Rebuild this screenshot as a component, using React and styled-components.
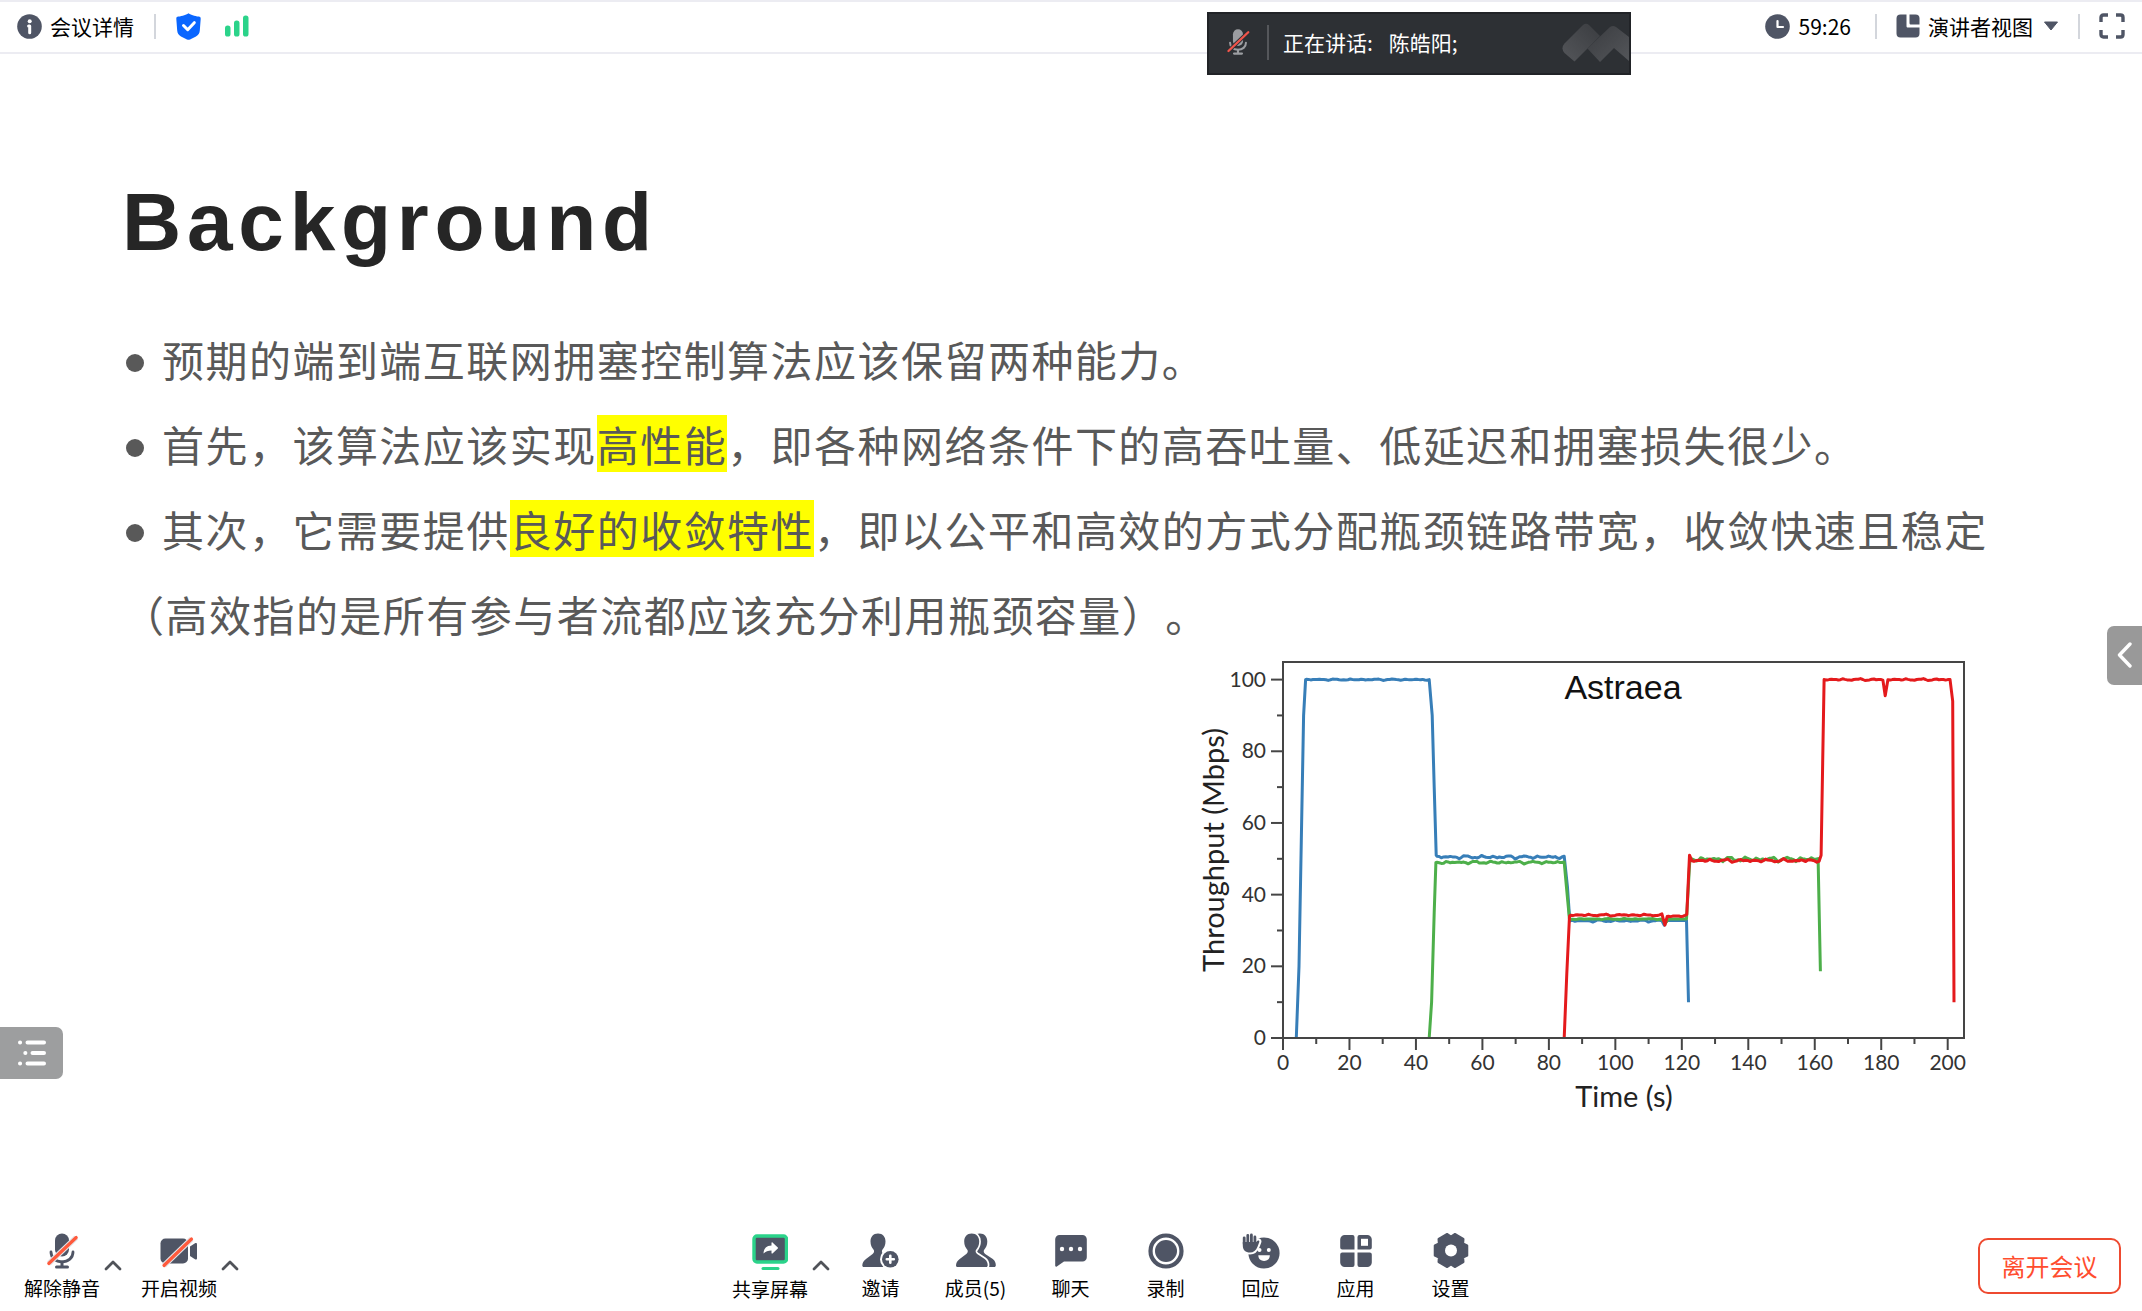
import React from "react";
import styled, { createGlobalStyle } from "styled-components";

const ink = "#4f5565";
const red = "#ff5a3c";
const green = "#2bd38a";
const uiFont = '"Noto Sans CJK SC", "Noto Sans", sans-serif';

const GlobalStyle = createGlobalStyle`
  *, *::before, *::after { box-sizing: border-box; }
  body { margin: 0; background: #fff; font-family: ${uiFont}; color: #000; text-spacing-trim: space-all; }
  button, select { font: inherit; color: inherit; background: none; border: 0; padding: 0; margin: 0; cursor: pointer; }
  h1, p, ul, figure { margin: 0; padding: 0; }
  svg { display: block; flex: none; }
`;

/* ---------- layout ---------- */

const Page = styled.div`
  position: relative;
  display: flex;
  flex-direction: column;
  min-height: 100vh;
  overflow: hidden;
`;

const TopBar = styled.header`
  display: flex;
  align-items: center;
  justify-content: space-between;
  height: 54px;
  padding: 0 17px 2px;
  border-top: 2px solid #ececf2;
  border-bottom: 2px solid #ececf2;
`;

const BarGroup = styled.div`
  display: flex;
  align-items: center;
  gap: ${(p) => p.$gap}px;
`;

const BarButton = styled.button`
  display: flex;
  align-items: center;
  gap: 8px;
  font-size: 21px;
  line-height: 30px;
`;

const Timer = styled.div`
  display: flex;
  align-items: center;
  gap: 9px;
  padding-right: 5px;
  font-size: 21px;
  line-height: 30px;
`;

const ViewPicker = styled.label`
  display: grid;
  grid-template-columns: 24px auto 18px;
  align-items: center;
  column-gap: 8px;

  svg:last-child {
    justify-self: end;
  }
`;

const ViewSelect = styled.select`
  appearance: none;
  font-size: 21px;
  line-height: 30px;
`;

const Divider = styled.span`
  width: 2px;
  height: ${(p) => p.$height || 25}px;
  background: ${(p) => p.$color || "#d3d6dc"};
`;

const SpeakerPanel = styled.aside`
  position: absolute;
  top: 12px;
  right: 511px;
  display: flex;
  align-items: center;
  width: 424px;
  height: 63px;
  padding: 0 0 3px 14px;
  gap: 14px;
  border: 2px solid #212327;
  background: #2d3034;
  color: #fff;
  font-size: 21px;
  line-height: 30px;
`;

const SpeakerText = styled.p`
  display: flex;
  flex: 1;
  gap: 16px;
`;

const Slide = styled.main`
  flex: 1;
  display: flex;
  flex-direction: column;
  padding: 120px 140px 0 122px;
`;

const Title = styled.h1`
  font: bold 82px/96px "Liberation Sans", Arial, sans-serif;
  letter-spacing: 0.07em;
  color: #262626;
`;

const slideText = `
  font-size: 42px;
  line-height: 85px;
  letter-spacing: 0.035em;
  color: #595959;
`;

const Points = styled.ul`
  ${slideText}
  margin-top: 46px;
  padding-left: 4px;
  list-style: none;
`;

const Point = styled.li`
  display: flex;
  align-items: center;
  gap: 18px;

  &::before {
    content: "";
    flex: none;
    width: 18px;
    height: 18px;
    margin-top: 8px;
    border-radius: 50%;
    background: #595959;
  }
`;

const Continuation = styled.p`
  ${slideText}
`;

const Highlight = styled.mark`
  display: inline-block;
  line-height: 57px;
  background: #ff0;
  color: inherit;
`;

const Figure = styled.figure`
  align-self: flex-end;
  margin-top: 2px;
`;

const ToolBar = styled.footer`
  display: flex;
  align-items: center;
  justify-content: space-between;
  height: 95px;
  padding: 8px 21px 0 23px;
`;

const ToolGroup = styled.div`
  display: flex;
  align-items: center;
`;

const SplitTool = styled.div`
  display: flex;
  align-items: center;
  margin-right: ${(p) => p.$after || 0}px;
`;

const ToolButton = styled.button`
  display: flex;
  flex-direction: column;
  align-items: center;
  gap: 5px;
  width: ${(p) => p.$width || 95}px;
  font-size: 19px;
  line-height: 28px;
  white-space: nowrap;
`;

const MoreButton = styled.button`
  display: grid;
  place-items: center;
  width: 24px;
  height: 24px;
  margin-bottom: 6px;
`;

const LeaveButton = styled.button`
  width: 143px;
  height: 56px;
  margin-bottom: 4px;
  border: 2px solid #ee4a30;
  border-radius: 10px;
  color: #ff4d2e;
  font-size: 24px;
  line-height: 36px;
`;

const OutlineTab = styled.button`
  position: absolute;
  left: 0;
  bottom: 232px;
  display: grid;
  place-items: center;
  width: 63px;
  height: 52px;
  border-radius: 0 7px 7px 0;
  background: #9d9e9f;
`;

const SideTab = styled.button`
  position: absolute;
  right: 0;
  top: calc(50% - 30px);
  display: grid;
  place-items: center;
  width: 35px;
  height: 59px;
  border-radius: 7px 0 0 7px;
  background: #999;
`;

/* ---------- icons ---------- */

const Icon = ({ w = 36, h = 36, vb, children }) => (
  <svg width={w} height={h} viewBox={vb || `0 0 ${w} ${h}`} fill="none" aria-hidden="true">
    {children}
  </svg>
);

const InfoIcon = () => (
  <Icon w={25} h={25}>
    <circle cx="12.5" cy="12.5" r="12.3" fill={ink} />
    <circle cx="12.7" cy="7.2" r="2" fill="#fff" />
    <path d="M11.6 12h1.1v6.800" stroke="#fff" strokeWidth="3" strokeLinecap="round" strokeLinejoin="round" />
  </Icon>
);

const ShieldIcon = () => (
  <Icon w={25} h={27}>
    <path d="M12.5.3C14 1.6 19 3.300 22.600 3.600 24 3.700 24.700 4.400 24.700 5.800L23.800 17.500C23.500 20.500 22.500 22 20 23.500L14 26.500Q12.500 27.200 11 26.500L5 23.500C2.500 22 1.500 20.500 1.200 17.500L.3 5.800C.3 4.400 1 3.700 2.400 3.600 6 3.300 11 1.600 12.500.3Z" fill="#0a66ff" />
    <path d="M7.500 12.500l4.200 4.200 6.600-7" stroke="#fff" strokeWidth="3" strokeLinecap="round" strokeLinejoin="round" />
  </Icon>
);

const SignalIcon = () => (
  <Icon w={24} h={22}>
    <g fill={green}>
      <rect x="0" y="10.500" width="5.500" height="11" rx="2.600" />
      <rect x="9" y="5.500" width="5.500" height="16" rx="2.600" />
      <rect x="18" y=".5" width="5.500" height="21" rx="2.600" />
    </g>
  </Icon>
);

const ClockIcon = () => (
  <Icon w={25} h={25}>
    <circle cx="12.500" cy="12.500" r="12.300" fill={ink} />
    <path d="M12.500 7v6h5.500" stroke="#fff" strokeWidth="2.200" strokeLinecap="round" strokeLinejoin="round" />
  </Icon>
);

const LayoutIcon = () => (
  <Icon w={24} h={24}>
    <g fill={ink}>
      <path d="M4 .5h6.500v11.500c0 1 .5 1.500 1.500 1.500h11.500V19.500a4 4 0 0 1-4 4H4.500a4 4 0 0 1-4-4V4.500a4 4 0 0 1 4-4z" />
      <path d="M13.500.5h6a4 4 0 0 1 4 4v6h-8.500c-1 0-1.500-.5-1.500-1.500z" />
    </g>
  </Icon>
);

const CaretIcon = () => (
  <Icon w={16} h={10}>
    <path d="M1.500 1h13L8 9z" fill={ink} stroke={ink} strokeLinejoin="round" />
  </Icon>
);

const FullscreenIcon = () => (
  <Icon w={26} h={26}>
    <path d="M2 9V4.500Q2 2 4.500 2H9M17 2h4.500Q24 2 24 4.500V9M24 17v4.500Q24 24 21.500 24H17M9 24H4.500Q2 24 2 21.500V17" stroke={ink} strokeWidth="3.400" />
  </Icon>
);

const MicShape = ({ color, slash, back }) => (
  <>
    <rect x="11" y=".5" width="14" height="23" rx="7" fill={color} />
    <path d="M7 19c0 6 4.800 9.800 11 9.800S29 25 29 19" stroke={color} strokeWidth="2.800" strokeLinecap="round" />
    <path d="M18 29v5M12.500 34h11" stroke={color} strokeWidth="3" strokeLinecap="round" />
    <path d="M4.800 30.500L32.200 4.500" stroke={back} strokeWidth="5.500" />
    <path d="M4.800 30.500L32.200 4.500" stroke={slash} strokeWidth="3.200" strokeLinecap="round" />
  </>
);

const MicOffIcon = () => (
  <Icon>
    <MicShape color={ink} slash={red} back="#e4e5e9" />
  </Icon>
);

const PanelMicIcon = () => (
  <Icon w={30} h={26} vb="-2 0 40 36">
    <MicShape color="#9b9da1" slash="#f0544a" back="#2d3034" />
  </Icon>
);

const VideoOffIcon = () => (
  <Icon w={38} h={36}>
    <rect x=".5" y="5.500" width="27.500" height="25" rx="5" fill={ink} />
    <path d="M30 13.500l5-3.300c1-.6 2-.2 2 1v14c0 1.200-1 1.600-2 1l-5-3.300z" fill={ink} />
    <path d="M4 32.500L31.500 6" stroke="#e4e5e9" strokeWidth="5.500" />
    <path d="M4 32.500L31.500 6" stroke={red} strokeWidth="3.200" strokeLinecap="round" />
  </Icon>
);

const ShareIcon = () => (
  <Icon w={36} h={37}>
    <rect x="2" y="3" width="32.500" height="26" rx="3" fill={ink} stroke={green} strokeWidth="3.400" />
    <path d="M11.500 20.500c.3-5.200 3.200-8 8-8V9.800c0-.6.600-.8 1-.4l5.300 5c.4.400.4.800 0 1.200l-5.300 4.800c-.4.400-1 .2-1-.4v-2.600c-3.400 0-6 1-8 3.100z" fill="#fff" />
    <rect x="9.500" y="34" width="18" height="3" rx="1.500" fill={green} />
  </Icon>
);

const personPath =
  "M16 .5C20.800.5 23.500 4 23.500 8.500 23.500 12 22.200 14.600 20.400 16.800 19.400 18.200 20 20 21.400 21L29 26C31.500 27.800 32 30.500 32 32.200 32 33.400 31.500 34 30.200 34H1.800C.8 34 .3 33.400.3 32.500.3 30 1.500 27.800 4 26L10.600 21C12 20 12.600 18.200 11.600 16.800 9.800 14.600 8.500 12 8.500 8.500 8.500 4 11.200.5 16 .5Z";

const InviteIcon = () => (
  <Icon w={37} h={36}>
    <path d={personPath} fill={ink} />
    <circle cx="28.300" cy="26.300" r="10.300" fill="#fff" />
    <circle cx="28.300" cy="26.300" r="8.300" fill={ink} />
    <path d="M28.300 22.800v7M24.800 26.300h7" stroke="#fff" strokeWidth="2.600" strokeLinecap="round" />
  </Icon>
);

const MembersIcon = () => (
  <Icon w={40} h={36}>
    <path d={personPath} fill={ink} transform="translate(7.800 0)" />
    <path d={personPath} fill={ink} stroke="#fff" strokeWidth="3.400" paintOrder="stroke" transform="translate(-.3 0)" />
  </Icon>
);

const ChatIcon = () => (
  <Icon w={32} h={36}>
    <path d="M4.500 2h23a4.300 4.300 0 0 1 4.300 4.300v18a4.300 4.300 0 0 1-4.300 4.300H9L1.800 33.500C.8 34 .2 33.500.2 32.500V6.300A4.300 4.300 0 0 1 4.500 2z" fill={ink} />
    <g fill="#fff">
      <circle cx="7" cy="16" r="2.200" />
      <circle cx="16" cy="16" r="2.200" />
      <circle cx="25" cy="16" r="2.200" />
    </g>
  </Icon>
);

const RecordIcon = () => (
  <Icon>
    <circle cx="18" cy="18" r="15.500" stroke={ink} strokeWidth="4.200" />
    <circle cx="18" cy="18" r="11" fill={ink} />
  </Icon>
);

const palmPath = "M.8 9H14.200L15.500 7.800C16.300 7 17.800 7.600 17.300 9L15.600 13.500C14 17.500 11.500 19.500 8 19.500 3.500 19.500.8 17 .8 12.500Z";

const ReactIcon = () => (
  <Icon w={38} h={36}>
    <circle cx="22" cy="20" r="15.600" fill={ink} />
    <path d={palmPath} fill="#fff" stroke="#fff" strokeWidth="4" strokeLinejoin="round" />
    <path d={palmPath} fill={ink} />
    <path d="M2.200 4.800V11M5.800 2.300V11M9.400 1.900V11M12.900 3.900V11" stroke={ink} strokeWidth="2.800" strokeLinecap="round" />
    <circle cx="17.500" cy="17" r="2" fill="#fff" />
    <circle cx="26.800" cy="17" r="2" fill="#fff" />
    <path d="M16.300 22.300h11.500c0 3.600-2.400 5.700-5.700 5.700s-5.800-2.100-5.800-5.700z" fill="#fff" />
  </Icon>
);

const AppsIcon = () => (
  <Icon w={32} h={36}>
    <g fill={ink}>
      <path d="M5 2h7.500a2 2 0 0 1 2 2v12.500H2.200a2 2 0 0 1-2-2V6.500A4.500 4.500 0 0 1 5 2z" />
      <path d="M19.500 2H27a4.500 4.500 0 0 1 4.800 4.500v8a2 2 0 0 1-2 2H17.500V4a2 2 0 0 1 2-2z" />
      <path d="M2.200 19.500h12.300V32a2 2 0 0 1-2 2H5A4.500 4.500 0 0 1 .2 29.500v-8a2 2 0 0 1 2-2z" />
      <path d="M17.500 19.500h12.300a2 2 0 0 1 2 2v8A4.500 4.500 0 0 1 27 34h-7.500a2 2 0 0 1-2-2z" />
    </g>
    <rect x="21" y="5.800" width="7" height="7" fill="#fff" />
  </Icon>
);

const gearPoints = Array.from({ length: 6 }, (_, k) =>
  [[-17, 16.800], [17, 16.800], [30, 13.800]].map(([offset, r]) => {
    const a = ((k * 60 + offset) * Math.PI) / 180;
    return `${(18 + r * Math.cos(a)).toFixed(2)},${(17.500 + r * Math.sin(a)).toFixed(2)}`;
  }).join(" ")
).join(" ");

const GearIcon = () => (
  <Icon>
    <polygon points={gearPoints} fill={ink} stroke={ink} strokeWidth="2.400" strokeLinejoin="round" />
    <circle cx="18" cy="17.500" r="6" fill="#fff" />
  </Icon>
);

const ChevronUpIcon = () => (
  <Icon w={18} h={12}>
    <path d="M2 10l7-7 7 7" stroke="#505359" strokeWidth="2.800" strokeLinecap="round" strokeLinejoin="round" />
  </Icon>
);

const ChevronLeftIcon = () => (
  <Icon w={16} h={26}>
    <path d="M13 2L2.500 13 13 24" stroke="#fff" strokeWidth="3.400" strokeLinecap="round" strokeLinejoin="round" />
  </Icon>
);

const OutlineIcon = () => (
  <Icon w={30} h={26}>
    <g stroke="#fff" strokeWidth="4" strokeLinecap="round">
      <path d="M3 2.500h.1M10.500 2.500H27M8.300 13h.1M15.500 13H27M3 23.500h.1M10.500 23.500H27" />
    </g>
  </Icon>
);

const BrandMark = () => (
  <Icon w={68} h={41}>
    <defs>
      <linearGradient id="fold" x1="0" y1="0" x2="1" y2="1">
        <stop offset="0" stopColor="#3a3c40" />
        <stop offset="1" stopColor="#54565a" />
      </linearGradient>
      <linearGradient id="wing" x1="0" y1="1" x2="1" y2="0">
        <stop offset="0" stopColor="#54565a" />
        <stop offset="1" stopColor="#3a3c40" />
      </linearGradient>
    </defs>
    <path d="M3.500 21.500L22 3Q25 .5 28 3L39 14 26.500 26.500 13.500 39.500 3.500 31Q-.5 26 3.500 21.500Z" fill="url(#wing)" />
    <path d="M26.500 26.500L49 5Q52 3 55 5L68 15V39L53 26 39 40Z" fill="url(#fold)" />
  </Icon>
);

/* ---------- chart ---------- */

const chart = { width: 807, height: 460, left: 88, top: 4, right: 769, bottom: 380 };
const px = (t) => chart.left + t * 3.3235;
const py = (v) => chart.bottom - v * 3.584;

const wobble = (i, seed) =>
  Math.sin(i * 1.900 + seed) * 0.4 * Math.sin(i * 0.37 + seed) + Math.sin(i * 5.300 + seed * 2) * 0.35 + Math.sin(i * 0.700 + seed * 5) * 0.25;

/* A segment written as [t0, t1, value, noise] is a noisy plateau; [t, value] is a plain vertex. */
const trace = (parts, seed) =>
  parts
    .flatMap((s) => {
      if (s.length === 2) return [s];
      const [t0, t1, value, noise] = s;
      const n = Math.round((t1 - t0) * 1.5);
      return Array.from({ length: n + 1 }, (_, i) => [t0 + ((t1 - t0) * i) / n, value + noise * wobble(i, seed)]);
    })
    .map(([t, v]) => `${px(t).toFixed(1)},${py(v).toFixed(1)}`)
    .join(" ");

const series = [
  {
    color: "#377eb8",
    points: trace([[4, 0], [4.800, 20], [5.500, 55], [6.200, 90], [6.800, 100], [7, 44, 100, 0.25], [44.900, 90], [45.500, 70], [46.100, 51], [46.300, 84.600, 50.500, 0.6], [85.600, 42], [86.300, 32.600], [86.500, 114, 32.700, 0.4], [114.700, 31.500], [115.500, 32.800], [121.400, 32.800], [122, 10]], 1),
  },
  {
    color: "#4daf4a",
    points: trace([[44, 0], [44.700, 10], [45.500, 35], [46, 49], [46.300, 84.600, 49, 0.5], [85.300, 42], [86.200, 33], [86.500, 114, 33.200, 0.2], [115, 32], [116, 33.200], [121.400, 33.200], [122.400, 49.500], [123, 161, 49.900, 0.9], [161.700, 18.600]], 3),
  },
  {
    color: "#e41a1c",
    points: trace([[84.600, 0], [85.400, 18], [86.200, 34], [86.500, 114, 34.300, 0.35], [114.900, 31.500], [115.600, 33.900], [116, 121, 34, 0.35], [121.500, 34.500], [122.300, 51], [123, 161.300, 49.500, 0.6], [161.900, 51], [162.800, 100], [163, 180.500, 100, 0.35], [181.200, 95.500], [182, 200.700, 100, 0.35], [201.500, 94], [201.900, 10]], 2),
  },
];

const AxisLine = styled.path`
  fill: none;
  stroke: #454545;
  stroke-width: 2px;
`;

const TickLabel = styled.text`
  font: 21px Lato, sans-serif;
  fill: #333;
  text-anchor: ${(p) => p.$anchor};
`;

const AxisTitle = styled.text`
  font: 29px Lato, sans-serif;
  fill: #222;
  text-anchor: middle;
`;

const ChartTitle = styled.text`
  font: 34px "Liberation Sans", Arial, sans-serif;
  fill: #111;
  text-anchor: middle;
`;

const range = (end, step) => Array.from({ length: Math.floor(end / step) + 1 }, (_, i) => i * step);

const ThroughputChart = () => (
  <svg width={chart.width} height={chart.height} role="img" aria-label="Astraea throughput over time">
    {series.map((s) => (
      <polyline key={s.color} points={s.points} fill="none" stroke={s.color} strokeWidth="3" strokeLinejoin="round" />
    ))}
    <AxisLine d={`M${chart.left} ${chart.top}H${chart.right}V${chart.bottom}H${chart.left}Z`} />
    {range(200, 10).map((t) => (
      <AxisLine key={t} d={`M${px(t)} ${chart.bottom}v${t % 20 ? 6 : 12}`} />
    ))}
    {range(100, 10).map((v) => (
      <AxisLine key={v} d={`M${chart.left} ${py(v)}h${v % 20 ? -6 : -12}`} />
    ))}
    {range(200, 20).map((t) => (
      <TickLabel key={t} $anchor="middle" x={px(t)} y={chart.bottom + 32}>{t}</TickLabel>
    ))}
    {range(100, 20).map((v) => (
      <TickLabel key={v} $anchor="end" x={chart.left - 17} y={py(v) + 7}>{v}</TickLabel>
    ))}
    <AxisTitle x="429" y="449">Time (s)</AxisTitle>
    <AxisTitle transform="translate(29 192) rotate(-90)">Throughput (Mbps)</AxisTitle>
    <ChartTitle x="428" y="41">Astraea</ChartTitle>
  </svg>
);

/* ---------- page ---------- */

const tools = [
  ["邀请", InviteIcon],
  ["成员(5)", MembersIcon],
  ["聊天", ChatIcon],
  ["录制", RecordIcon],
  ["回应", ReactIcon],
  ["应用", AppsIcon],
  ["设置", GearIcon],
];

const Tool = ({ label, icon: Glyph, width }) => (
  <ToolButton type="button" $width={width}>
    <Glyph />
    {label}
  </ToolButton>
);

const ToolWithMenu = ({ label, icon, menuLabel, after }) => (
  <SplitTool $after={after}>
    <Tool label={label} icon={icon} width={78} />
    <MoreButton type="button" aria-label={menuLabel}>
      <ChevronUpIcon />
    </MoreButton>
  </SplitTool>
);

export default function App() {
  return (
    <Page lang="zh-CN">
      <GlobalStyle />
      <TopBar>
        <BarGroup $gap={20}>
          <BarButton type="button">
            <InfoIcon />
            会议详情
          </BarButton>
          <Divider />
          <BarGroup $gap={24}>
            <BarButton type="button" aria-label="会议安全">
              <ShieldIcon />
            </BarButton>
            <BarButton type="button" aria-label="网络状态">
              <SignalIcon />
            </BarButton>
          </BarGroup>
        </BarGroup>
        <BarGroup $gap={19}>
          <Timer>
            <ClockIcon />
            59:26
          </Timer>
          <Divider />
          <ViewPicker>
            <LayoutIcon />
            <ViewSelect aria-label="视图" defaultValue="speaker">
              <option value="speaker">演讲者视图</option>
            </ViewSelect>
            <CaretIcon />
          </ViewPicker>
          <Divider />
          <BarButton type="button" aria-label="全屏">
            <FullscreenIcon />
          </BarButton>
        </BarGroup>
      </TopBar>

      <Slide>
        <Title>Background</Title>
        <Points>
          <Point>
            <span>预期的端到端互联网拥塞控制算法应该保留两种能力。</span>
          </Point>
          <Point>
            <span>
              首先，该算法应该实现<Highlight>高性能</Highlight>，即各种网络条件下的高吞吐量、低延迟和拥塞损失很少。
            </span>
          </Point>
          <Point>
            <span>
              其次，它需要提供<Highlight>良好的收敛特性</Highlight>，即以公平和高效的方式分配瓶颈链路带宽，收敛快速且稳定
            </span>
          </Point>
        </Points>
        <Continuation>（高效指的是所有参与者流都应该充分利用瓶颈容量）。</Continuation>
        <Figure>
          <ThroughputChart />
        </Figure>
      </Slide>

      <ToolBar>
        <ToolGroup>
          <ToolWithMenu label="解除静音" icon={MicOffIcon} menuLabel="音频选项" after={15} />
          <ToolWithMenu label="开启视频" icon={VideoOffIcon} menuLabel="视频选项" after={9} />
        </ToolGroup>
        <ToolGroup>
          <ToolWithMenu label="共享屏幕" icon={ShareIcon} menuLabel="共享选项" />
          {tools.map(([label, icon]) => (
            <Tool key={label} label={label} icon={icon} />
          ))}
        </ToolGroup>
        <LeaveButton type="button">离开会议</LeaveButton>
      </ToolBar>

      <SpeakerPanel>
        <PanelMicIcon />
        <Divider $height={35} $color="#55575b" />
        <SpeakerText>
          <span>正在讲话:</span>
          <span>陈皓阳;</span>
        </SpeakerText>
        <BrandMark />
      </SpeakerPanel>

      <OutlineTab type="button" aria-label="目录">
        <OutlineIcon />
      </OutlineTab>
      <SideTab type="button" aria-label="展开侧栏">
        <ChevronLeftIcon />
      </SideTab>
    </Page>
  );
}
